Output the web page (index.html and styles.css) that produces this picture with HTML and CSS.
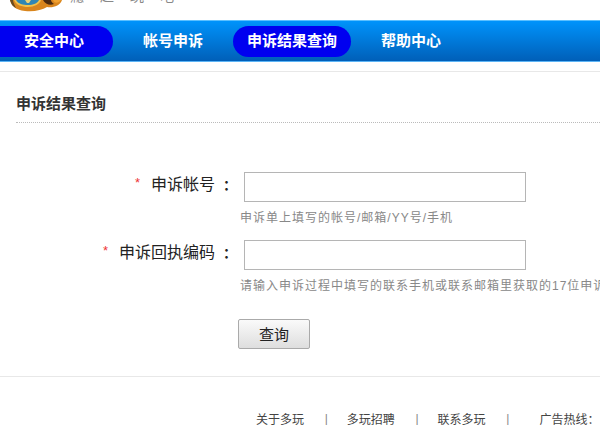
FILE: index.html
```html
<!DOCTYPE html>
<html lang="zh-CN">
<head>
  <meta charset="UTF-8">
  <title>申诉结果查询</title>
  <link rel="stylesheet" href="styles.css">
</head>
<body>
  <div class="top">
    <svg class="logo" width="66" height="12" viewBox="0 0 66 12">
      <path d="M10 0 C11 5 15 10 25 11 C34 12 42 10 47 7 C53 8 60 6 62 0 Z" fill="#d9851c"/>
      <path d="M10 0 C11 3 12 6 16 8 C14 4 13 2 13 0 Z" fill="#6b4a1e"/>
      <path d="M14 0 C16 5 22 7 28 7 C34 7 40 4 41 0 Z" fill="#f2c14a"/>
      <path d="M16 0 C18 4 23 5 28 5 C33 5 38 3 39 0 Z" fill="#2f86b4"/>
      <path d="M25 0 L31 0 L29 3 L27 3 Z" fill="#e9d27a"/>
      <path d="M43 0 C45 4 50 6 54 4 C52 3 51 1 51 0 Z" fill="#4c2a10"/>
      <path d="M53 0 C54 3 58 4 61 0 Z" fill="#f0a030"/>
    </svg>
    <div class="slogan"><span>瘾</span><span>起</span><span>玩</span><span>吧</span></div>
  </div>
  <div class="nav">
    <a class="navItem home current">安全中心</a>
    <a class="navItem">帐号申诉</a>
    <a class="navItem current wide">申诉结果查询</a>
    <a class="navItem">帮助中心</a>
  </div>
  <div class="main">
    <h2 class="title">申诉结果查询</h2>
    <div class="form">
      <div class="row">
        <label class="label"><i class="star">*</i><span>申诉帐号</span><b class="colon">：</b></label>
        <input class="ipt" type="text">
      </div>
      <p class="tip">申诉单上填写的帐号/邮箱/YY号/手机</p>
      <div class="row">
        <label class="label"><i class="star">*</i><span>申诉回执编码</span><b class="colon">：</b></label>
        <input class="ipt" type="text">
      </div>
      <p class="tip">请输入申诉过程中填写的联系手机或联系邮箱里获取的17位申诉回执编码</p>
      <button class="btn" type="button">查询</button>
    </div>
  </div>
  <div class="footer">
    <a>关于多玩</a><i>|</i><a>多玩招聘</a><i>|</i><a>联系多玩</a><i>|</i><a class="hot">广告热线：</a>
  </div>
</body>
</html>
```

FILE: styles.css
```css
* {
  margin: 0;
  padding: 0;
  box-sizing: border-box;
}
html, body {
  overflow: hidden;
}
body {
  width: 600px;
  height: 425px;
  background: #fff;
  font-family: "Liberation Sans", "Noto Sans CJK SC", sans-serif;
  font-size: 12px;
  color: #333;
}
.top {
  height: 20px;
  display: flex;
  align-items: flex-start;
  white-space: nowrap;
}
.logo {
  display: block;
  flex: none;
}
.slogan {
  display: flex;
  gap: 16px;
  margin: -11px 0 0 4px;
  font-size: 14px;
  line-height: 14px;
  color: #888;
}
.nav {
  height: 42px;
  display: flex;
  align-items: center;
  border-top: 1px solid #5cc0ff;
  border-bottom: 1px solid #5cb4f5;
  background: linear-gradient(#0093fb, #005fb8);
}
.navItem {
  width: 120px;
  height: 31px;
  line-height: 30px;
  text-align: center;
  font-size: 15px;
  font-weight: 700;
  color: #fff;
}
.navItem.current {
  background: #0000f0;
  border-radius: 16px;
}
.navItem.home {
  width: 113px;
  padding-right: 5px;
  border-radius: 0 16px 16px 0;
}
.navItem.wide {
  width: 118px;
}
.main {
  margin-top: 9px;
  border-top: 1px solid #e8e8e8;
  height: 306px;
  border-bottom: 1px solid #e8e8e8;
}
.title {
  margin: 0 0 0 16px;
  height: 51px;
  line-height: 64px;
  font-size: 15px;
  color: #333;
  border-bottom: 1px dotted #bbb;
}
.form {
  padding-top: 49px;
}
.row {
  display: flex;
  align-items: center;
  height: 30px;
}
.label {
  width: 244px;
  height: 24px;
  line-height: 24px;
  margin-bottom: 5px;
  display: flex;
  justify-content: flex-end;
  align-items: center;
  font-size: 16px;
  color: #222;
  white-space: nowrap;
}
.star {
  color: #e33;
  font-style: normal;
  font-size: 13px;
  margin: 0 11px 4px 0;
}
.colon {
  width: 21px;
  margin-left: 8px;
  font-size: 14px;
  font-weight: 700;
  text-align: left;
}
.ipt {
  width: 282px;
  height: 30px;
  border: 1px solid #b5b5b5;
  background: #fff;
}
.tip {
  height: 38px;
  padding: 8px 0 0 240px;
  line-height: 17px;
  font-size: 12px;
  letter-spacing: 1px;
  color: #888;
  white-space: nowrap;
  overflow: hidden;
}
.btn {
  display: block;
  width: 72px;
  height: 30px;
  margin: 11px 0 0 238px;
  padding-bottom: 2px;
  border: 1px solid #aaa;
  border-radius: 2px;
  background: linear-gradient(#fafafa, #dedede);
  font-family: inherit;
  font-size: 15px;
  color: #222;
}
.footer {
  display: flex;
  align-items: center;
  height: 47px;
  padding: 36px 0 0 256px;
  font-size: 12px;
  color: #444;
  white-space: nowrap;
}
.footer i {
  width: 43.75px;
  padding-left: 2px;
  text-align: center;
  font-style: normal;
  font-weight: 400;
  color: #888;
}
.footer a {
  width: 48px;
}
.footer .hot {
  width: 62px;
  margin-left: 11.5px;
}
```
